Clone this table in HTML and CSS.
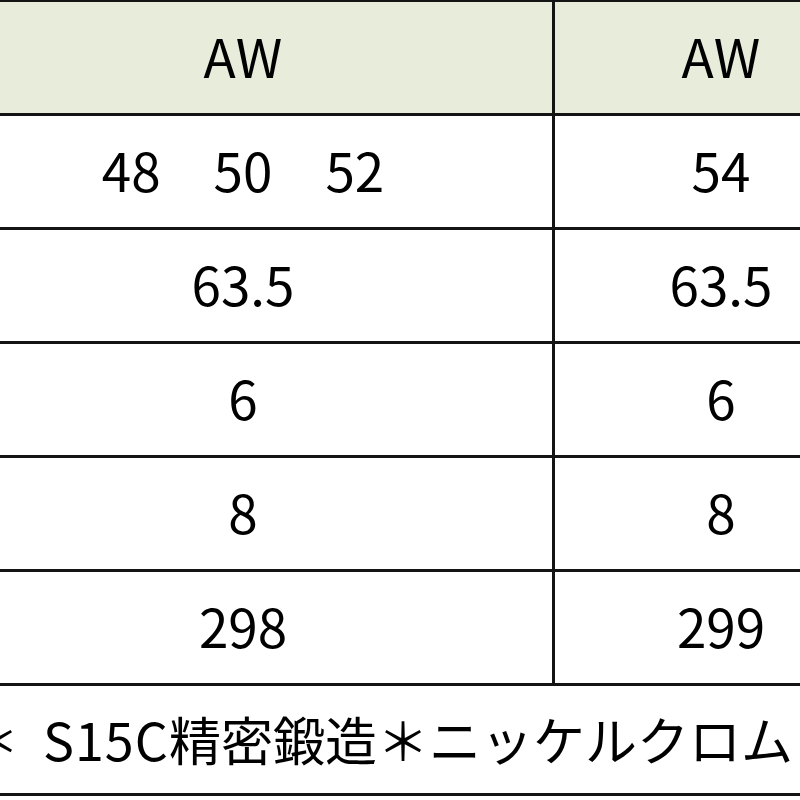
FILE: index.html
```html
<!DOCTYPE html>
<html lang="ja">
<head>
<meta charset="utf-8">
<title>Spec table</title>
<link rel="stylesheet" href="styles.css">
</head>
<body>
<div class="sheet">
  <div class="grid">
    <div class="cell head">AW</div>
    <div class="cell head">AW</div>
    <div class="cell">48　50　52</div>
    <div class="cell">54</div>
    <div class="cell">63.5</div>
    <div class="cell">63.5</div>
    <div class="cell">6</div>
    <div class="cell">6</div>
    <div class="cell">8</div>
    <div class="cell">8</div>
    <div class="cell">298</div>
    <div class="cell">299</div>
    <div class="cell note">＊<span class="latin">S15C</span>精密鍛造＊ニッケルクロム</div>
  </div>
</div>
</body>
</html>
```

FILE: styles.css
```css
html, body {
  margin: 0;
  padding: 0;
  background: #ffffff;
  overflow: hidden;
}
.sheet {
  width: 800px;
  height: 800px;
  overflow: hidden;
}
.grid {
  display: grid;
  grid-template-columns: 618px 332px;
  grid-template-rows: 111px 111px 111px 111px 111px 111px 107px;
  gap: 3px;
  padding: 3px;
  width: max-content;
  margin-left: -69px;
  margin-top: -1px;
  background: #141414;
  font-family: "Noto Sans CJK JP", "Noto Sans", sans-serif;
  font-size: 53px;
  color: #000000;
}
.cell {
  background: #ffffff;
  display: flex;
  align-items: center;
  justify-content: center;
  white-space: nowrap;
  line-height: 1;
  padding-bottom: 5px;
  box-sizing: border-box;
}
.head {
  background: #e8ecdb;
}
.note {
  grid-column: 1 / span 2;
  justify-content: flex-start;
  padding-left: 34px;
  padding-bottom: 2px;
  font-size: 52px;
  overflow: hidden;
}
.latin {
  margin-left: 23px;
  letter-spacing: 1px;
}
```
